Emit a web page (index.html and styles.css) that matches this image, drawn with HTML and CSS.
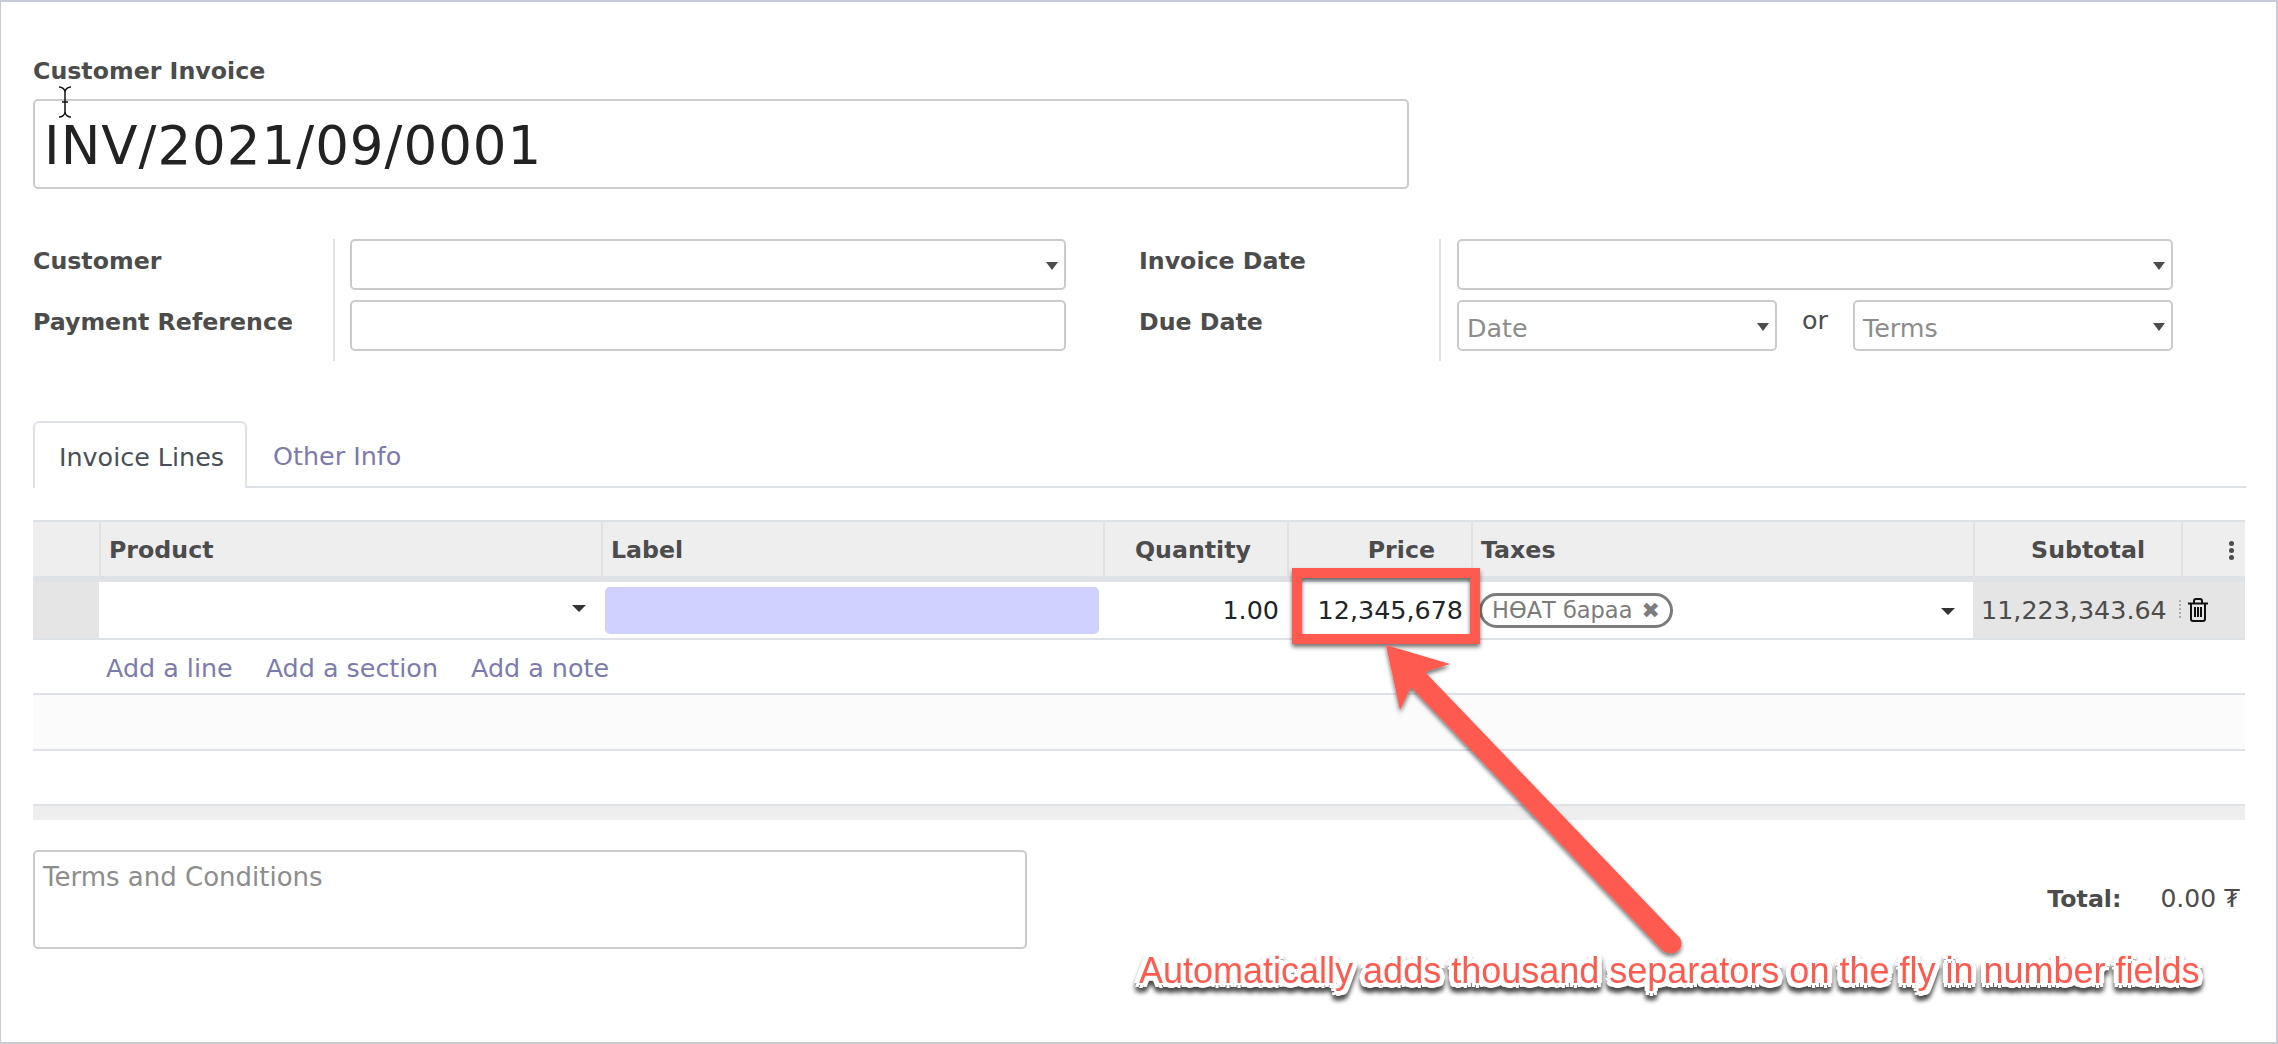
FILE: index.html
```html
<!DOCTYPE html>
<html lang="en">
<head>
  <meta charset="UTF-8">
  <title>Customer Invoice</title>
  <link rel="stylesheet" href="styles.css">
</head>
<body>
  <div class="page">
    <div class="title-label">Customer Invoice</div>
    <div class="field title-field">INV/2021/09/0001</div>

    <div class="form-groups">
      <div class="group group-left">
        <div class="labels">
          <label>Customer</label>
          <label>Payment Reference</label>
        </div>
        <div class="controls">
          <div class="field drop"></div>
          <div class="field"></div>
        </div>
      </div>
      <div class="group group-right">
        <div class="labels">
          <label>Invoice Date</label>
          <label>Due Date</label>
        </div>
        <div class="controls">
          <div class="field drop"></div>
          <div class="due-row">
            <div class="field drop placeholder">Date</div>
            <span class="or">or</span>
            <div class="field drop placeholder">Terms</div>
          </div>
        </div>
      </div>
    </div>

    <div class="tabs">
      <div class="tab active">Invoice Lines</div>
      <div class="tab">Other Info</div>
    </div>

    <table class="lines">
      <colgroup>
        <col class="c-handle"><col class="c-product"><col class="c-label"><col class="c-qty">
        <col class="c-price"><col class="c-taxes"><col class="c-sub"><col class="c-opt">
      </colgroup>
      <thead>
        <tr>
          <th></th>
          <th>Product</th>
          <th>Label</th>
          <th class="num">Quantity</th>
          <th class="num">Price</th>
          <th>Taxes</th>
          <th class="num">Subtotal</th>
          <th class="kebab"><span></span><span></span><span></span></th>
        </tr>
      </thead>
      <tbody>
        <tr class="edit-row">
          <td class="grey"></td>
          <td class="drop-cell"><i class="caret caret-product"></i></td>
          <td class="label-cell"><div class="label-input"></div></td>
          <td class="num">1.00</td>
          <td class="num price">12,345,678</td>
          <td class="drop-cell">
            <span class="pill">НӨАТ бараа <b>✖</b></span>
            <i class="caret caret-taxes"></i>
          </td>
          <td class="grey sub">11,223,343.64</td>
          <td class="grey trash">
            <svg width="20" height="24" viewBox="0 0 20 24">
              <path d="M6 5V3C6 2 7 1 8 1h4c1 0 2 1 2 2V5M0 5.500h20M3 6v15C3 22 4 23 5 23h10c1 0 2-1 2-2V6" fill="none" stroke="#111" stroke-width="2"/>
              <path d="M7 9v10M10 9v10M13 9v10" stroke="#111" stroke-width="2"/>
            </svg>
          </td>
        </tr>
        <tr class="add-row">
          <td></td>
          <td colspan="7">
            <a>Add a line</a><a>Add a section</a><a>Add a note</a>
          </td>
        </tr>
        <tr class="empty odd"><td colspan="8"></td></tr>
        <tr class="empty"><td colspan="8"></td></tr>
      </tbody>
      <tfoot>
        <tr><td colspan="8"></td></tr>
      </tfoot>
    </table>

    <div class="bottom">
      <div class="field terms placeholder">Terms and Conditions</div>
      <div class="total"><b>Total:</b><span>0.00 ₮</span></div>
    </div>
  </div>

  <!-- annotation layer drawn on top of the screenshot -->
  <svg class="overlay" width="2278" height="1044" viewBox="0 0 2278 1044">
    <defs>
      <filter id="drop" x="-20%" y="-20%" width="140%" height="140%">
        <feDropShadow dx="0" dy="3" stdDeviation="2" flood-color="#000" flood-opacity="0.55"/>
      </filter>
    </defs>
    <g filter="url(#drop)" fill="#ff5a4f">
      <path fill-rule="evenodd" d="M1292 568H1480V644H1292ZM1302 578V634H1470V578Z"/>
      <path d="M1386 645L1450 664L1425 672L1680 938C1686 950 1672 958 1662 950L1411 687L1400 710Z"/>
    </g>
  </svg>
  <div class="note">Automatically adds thousand separators on the fly in number fields</div>

  <!-- text cursor left in the capture -->
  <svg class="ibeam" width="16" height="32" viewBox="0 0 16 32">
    <path d="M2 1c3 0 6 2 6 5v20c0 3-3 5-6 5M14 1c-3 0-6 2-6 5v20c0 3 3 5 6 5M5 16h6" fill="none" stroke="#111" stroke-width="1.500"/>
  </svg>
</body>
</html>
```

FILE: styles.css
```css
* {
  box-sizing: border-box;
}

html, body {
  margin: 0;
  background: #fff;
}

body {
  width: 2278px;
  height: 1044px;
  overflow: hidden;
  position: relative;
  font-family: "DejaVu Sans", "Open Sans", sans-serif;
  font-size: 25.4px;
  color: #212529;
}

b, label, th, .title-label {
  font-size: 23.7px;
}

.page {
  height: 1044px;
  padding: 0 0 0 32px;
  border-top: 2px solid #c9c9dc;
  border-left: 1px solid #c9c9dc;
  border-right: 2px solid #c9c9dc;
  border-bottom: 2px solid #c9c9d0;
}

.title-label {
  height: 97px;
  padding-top: 51px;
  line-height: 36px;
  font-weight: bold;
  color: #4c4c4c;
}

.field {
  height: 51px;
  background: #fff;
  border: 2px solid #cbcbcb;
  border-radius: 5px;
  position: relative;
}

.title-field {
  width: 1376px;
  height: 90px;
  padding-left: 9px;
  font-size: 53px;
  line-height: 90px;
  letter-spacing: 1px;
  color: #222;
}

.drop::after {
  content: "";
  position: absolute;
  right: 6px;
  top: 21px;
  border: 6px solid transparent;
  border-top: 8px solid #4c4c4c;
  border-bottom: 0;
}

.placeholder {
  padding-left: 8px;
  line-height: 52px;
  color: #8d8d8d;
}

.form-groups {
  display: flex;
  margin-top: 50px;
}

.group {
  display: flex;
}

.group-left {
  width: 1106px;
}

.labels {
  display: flex;
  flex-direction: column;
  gap: 23px;
  width: 300px;
  padding-top: 7px;
  font-weight: bold;
  color: #4c4c4c;
}

.labels label {
  height: 38px;
  line-height: 30px;
}

.controls {
  display: flex;
  flex-direction: column;
  gap: 10px;
  width: 733px;
  height: 122px;
  padding-left: 15px;
  border-left: 2px solid #e2e2e2;
}

.group-right .controls {
  width: 734px;
  padding-left: 16px;
}

.due-row {
  display: flex;
  align-items: flex-start;
}

.due-row .field {
  width: 320px;
}

.or {
  width: 76px;
  padding-left: 25px;
  line-height: 40px;
  color: #4c4c4c;
}

.tabs {
  display: flex;
  margin-top: 60px;
  width: 2213px;
  height: 67px;
  border-bottom: 2px solid #dee2e6;
}

.tab {
  height: 67px;
  padding: 0 26px;
  line-height: 71px;
  white-space: nowrap;
  color: #7c7bad;
}

.tab.active {
  width: 214px;
  padding: 0 24px;
  line-height: 68px;
  color: #495057;
  background: #fff;
  border: 2px solid #dee2e6;
  border-bottom: 0;
  border-radius: 6px 6px 0 0;
}

.lines {
  width: 2212px;
  margin-top: 32px;
  table-layout: fixed;
  border-collapse: separate;
  border-spacing: 0;
}

.c-handle { width: 66px; }
.c-product { width: 502px; }
.c-label { width: 502px; }
.c-qty { width: 184px; }
.c-price { width: 184px; }
.c-taxes { width: 502px; }
.c-sub { width: 208px; }
.c-opt { width: 64px; }

.lines th {
  height: 62px;
  padding: 2px 8px 0;
  background: #eee;
  border-top: 2px solid #dee2e6;
  border-bottom: 6px solid #dee2e6;
  border-left: 2px solid #e2e2e2;
  text-align: left;
  font-weight: bold;
  color: #4c4c4c;
  white-space: nowrap;
}

.lines th:first-child {
  border-left: 0;
}

.lines th.num {
  text-align: right;
  padding-right: 36px;
}

.kebab span {
  display: block;
  width: 5px;
  height: 5px;
  margin: 2px 0 2px auto;
  background: #4c4c4c;
  border-radius: 50%;
}

.lines .kebab {
  padding-right: 11px;
}

.edit-row td {
  height: 58px;
  padding: 0;
  border-bottom: 2px solid #dee2e6;
  white-space: nowrap;
}

.edit-row .num {
  padding-right: 8px;
  text-align: right;
}

.grey {
  background: #e5e5e5;
}

.drop-cell {
  position: relative;
}

.caret {
  position: absolute;
  top: 26px;
  border: 7px solid transparent;
  border-top: 7px solid #333;
  border-bottom: 0;
}

.caret-product {
  right: 15px;
  top: 23px;
}

.caret-taxes {
  right: 18px;
}

.label-input {
  width: 494px;
  height: 47px;
  margin-left: 4px;
  background: #d0d0ff;
  border-radius: 5px;
}

.pill {
  display: inline-block;
  height: 35px;
  width: 194px;
  margin-left: 8px;
  padding-left: 10px;
  border: 3px solid #7c7c7c;
  border-radius: 18px;
  line-height: 28px;
  font-size: 22.5px;
  color: #7c7c7c;
}

.pill b {
  margin-left: 2px;
  font-size: 22px;
}

.edit-row .sub {
  position: relative;
  padding-left: 8px;
  color: #4c4c4c;
  overflow: hidden;
}

.sub::after {
  content: "";
  position: absolute;
  right: 0;
  top: 18px;
  height: 18px;
  border-right: 2px dotted #aaa;
}

.edit-row .trash {
  padding-left: 7px;
  line-height: 0;
}

.add-row td {
  height: 55px;
  padding: 3px 0 0;
  border-bottom: 2px solid #dee2e6;
}

.add-row a {
  margin-left: 7px;
  margin-right: 26px;
  color: #7c7bad;
}

.empty td {
  height: 56px;
  border-bottom: 2px solid #dee2e6;
}

.empty + .empty td {
  height: 55px;
}

.empty.odd td {
  background: #fbfbfb;
}

.lines tfoot td {
  height: 14px;
  padding: 0;
  background: #eee;
}

.bottom {
  display: flex;
  justify-content: space-between;
  align-items: flex-start;
  width: 2212px;
  margin-top: 30px;
}

.terms {
  width: 994px;
  height: 99px;
  line-height: 50px;
  font-size: 26px;
}

.total {
  display: flex;
  align-items: baseline;
  gap: 39px;
  margin-top: 34px;
  padding-right: 5px;
  font-size: 25px;
  color: #4c4c4c;
}

.overlay {
  position: absolute;
  top: 0;
  left: 0;
}

.note {
  position: absolute;
  left: 1139px;
  top: 949px;
  font-family: "Liberation Sans", sans-serif;
  font-size: 36px;
  line-height: 44px;
  white-space: nowrap;
  color: #ff5a4f;
  text-shadow: 5px 0 0 #fff, -5px 0 0 #fff, 0 5px 0 #fff, 0 -4px 0 #fff,
    4px 4px 0 #fff, -4px 4px 0 #fff, 4px -3px 0 #fff, -4px -3px 0 #fff,
    2px 2px 0 #fff, -2px 2px 0 #fff, 3px 0 0 #fff, -3px 0 0 #fff;
  filter: drop-shadow(0 5px 2px rgba(0, 0, 0, 0.7));
}

.ibeam {
  position: absolute;
  left: 57px;
  top: 86px;
}
```
